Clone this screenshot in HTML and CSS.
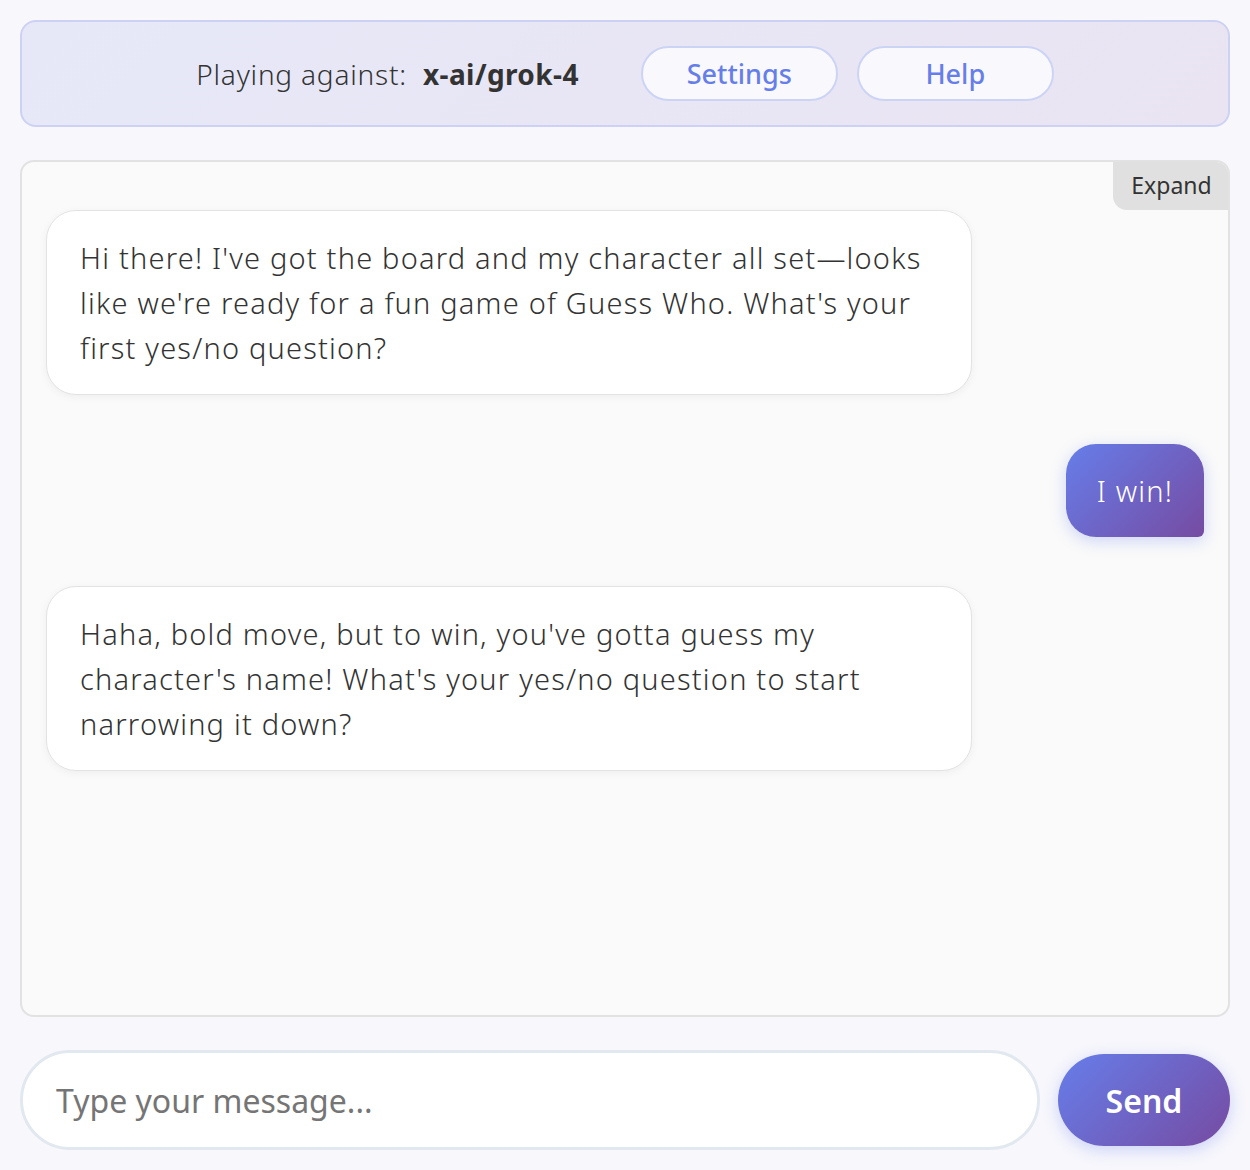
FILE: index.html
```html
<!DOCTYPE html>
<html lang="en">
<head>
<meta charset="utf-8">
<title>Guess Who</title>
<link rel="stylesheet" href="styles.css">
</head>
<body>
<div class="app">
  <header class="topbar">
    <div class="opponent">Playing against: <strong class="model">x-ai/grok-4</strong></div>
    <button class="pill-btn">Settings</button>
    <button class="pill-btn">Help</button>
  </header>
  <main class="chat">
    <div class="expand-row"><button class="expand-btn">Expand</button></div>
    <div class="messages">
      <div class="msg bot">Hi there! I've got the board and my character all set—looks like we're ready for a fun game of Guess Who. What's your first yes/no question?</div>
      <div class="msg user">I win!</div>
      <div class="msg bot">Haha, bold move, but to win, you've gotta guess my character's name! What's your yes/no question to start narrowing it down?</div>
    </div>
  </main>
  <footer class="composer">
    <input class="msg-input" type="text" placeholder="Type your message...">
    <button class="send-btn">Send</button>
  </footer>
</div>
</body>
</html>
```
FILE: styles.css
```css
* { box-sizing: border-box; }
html, body { margin: 0; height: 100%; }
body {
  background: #f7f7fc;
  font-family: "Noto Sans", "Open Sans", sans-serif;
  color: #333;
}
.app {
  height: 100vh;
  padding: 20px;
  display: flex;
  flex-direction: column;
}
.topbar {
  height: 107px;
  flex: none;
  border: 2px solid #cdd2f5;
  border-radius: 16px;
  background: linear-gradient(135deg, #e6e8f8 0%, #eae4f2 100%);
  display: flex;
  align-items: center;
  justify-content: center;
  gap: 19px;
}
.opponent {
  font-family: "Noto Sans", sans-serif;
  font-weight: 300;
  font-size: 28px;
  letter-spacing: 0.8px;
  color: #333;
  margin-right: 43px;
}
.model {
  font-weight: 700;
  letter-spacing: 0.4px;
  margin-left: 8px;
}
.pill-btn {
  width: 197px;
  height: 55px;
  border-radius: 28px;
  border: 2px solid #ccd4f6;
  background: #f9f9fd;
  color: #667eea;
  font-family: "Noto Sans", sans-serif;
  font-weight: 500;
  font-size: 27px;
  padding: 0;
}
.chat {
  flex: 1;
  margin-top: 33px;
  border: 2px solid #e2e2e2;
  border-radius: 14px;
  background: #fafafa;
  overflow: hidden;
  display: flex;
  flex-direction: column;
}
.expand-row {
  display: flex;
  justify-content: flex-end;
  height: 50px;
  margin-top: -2px;
  margin-right: -2px;
}
.expand-btn {
  height: 50px;
  width: 117px;
  border: none;
  border-radius: 0 14px 0 14px;
  background: #e0e0e0;
  color: #333;
  font-family: "Noto Sans", sans-serif;
  font-size: 23px;
  padding: 0;
}
.messages {
  padding: 0 24px 24px 24px;
  display: flex;
  flex-direction: column;
  gap: 49px;
}
.msg {
  max-width: 80%;
  font-family: "Noto Sans", sans-serif;
  font-weight: 300;
  font-size: 29px;
  letter-spacing: 1.2px;
  line-height: 45px;
  border-radius: 30px;
}
.bot {
  align-self: flex-start;
  width: 80%;
  background: #fff;
  border: 1px solid #e3e3e3;
  padding: 24px 33px;
  color: #333;
  box-shadow: 0 2px 8px rgba(0,0,0,0.05);
}
.user {
  align-self: flex-end;
  color: #fff;
  padding: 24px 31px;
  border-radius: 30px 30px 6px 30px;
  background: linear-gradient(135deg, #667eea 0%, #764ba2 100%);
  box-shadow: 0 4px 16px rgba(102,126,234,0.3);
}
.composer {
  flex: none;
  margin-top: 33px;
  display: flex;
  align-items: center;
  gap: 18px;
}
.msg-input {
  flex: 1;
  height: 100px;
  border: 3px solid #e2e8f0;
  border-radius: 50px;
  background: #fff;
  padding: 0 33px;
  font-family: "Noto Sans", sans-serif;
  font-size: 32px;
  color: #333;
  outline: none;
}
.msg-input::placeholder { color: #757575; }
.send-btn {
  width: 172px;
  height: 92px;
  border: none;
  border-radius: 46px;
  background: linear-gradient(135deg, #667eea 0%, #764ba2 100%);
  color: #fff;
  font-family: "Noto Sans", sans-serif;
  font-weight: 600;
  font-size: 32px;
  box-shadow: 0 4px 16px rgba(102,126,234,0.3);
}
```
